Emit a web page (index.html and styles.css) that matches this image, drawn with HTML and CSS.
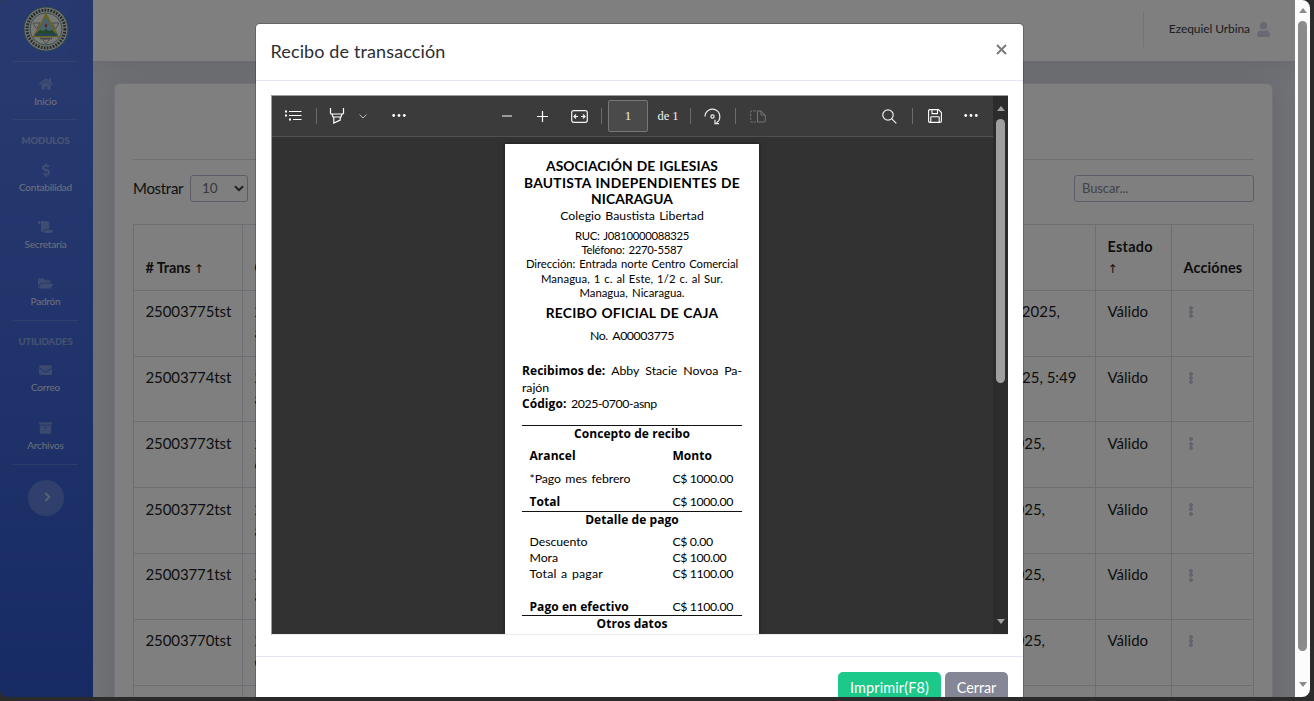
FILE: index.html
```html
<!DOCTYPE html>
<html lang="es">
<head>
<meta charset="utf-8">
<title>Recibo de transacción</title>
<link rel="stylesheet" href="styles.css">
</head>
<body>
<div class="window">
  <div class="page">
    <nav class="sidebar">
      <div class="brand">
        <svg width="46" height="46" viewBox="0 0 46 46">
          <circle cx="23" cy="23" r="22" fill="#dfe6e2" stroke="#4d8a80" stroke-width=".8"/>
          <circle cx="23" cy="23" r="18.900" fill="none" stroke="#4a504e" stroke-width="3" stroke-dasharray="1.700 1.300"/>
          <circle cx="23" cy="23" r="16" fill="#f1f4ee" stroke="#5f9d8c" stroke-width=".9"/>
          <path d="M10 17h7l-3.500 6zM29 17h7l-3.500 6zM19.500 33h7l-3.500 5.500z" fill="none" stroke="#8d9490" stroke-width=".9"/>
          <path d="M23 8.500L35 30.500H11z" fill="#8fc8dc" stroke="#d5bf38" stroke-width="1.700"/>
          <path d="M13.500 27l3.500-3 3 1 3-2 3 2 3-1 3 3 1 2.500H12.500z" fill="#4c9150"/>
          <path d="M12.500 27.500h21l1 2.300h-23z" fill="#4089bd"/>
          <path d="M23 17l1.400 2.800-1.400 2.400-1.400-2.400z" fill="#c9473c"/>
          <path d="M17 32.500h12" stroke="#777" stroke-width="1.500" stroke-dasharray="1.500 .6"/>
        </svg>
      </div>
      <hr class="divider">
      <a class="nav-item"><svg width="14" height="13" viewBox="0 0 576 512"><path d="M280 148L96 300v164a16 16 0 0 0 16 16h112a16 16 0 0 0 16-16v-96a16 16 0 0 1 16-16h64a16 16 0 0 1 16 16v96a16 16 0 0 0 16 16h112a16 16 0 0 0 16-16V300L296 148a12 12 0 0 0-16 0zM572 251l-84-69V44a12 12 0 0 0-12-12h-56a12 12 0 0 0-12 12v72l-90-74a48 48 0 0 0-61 0L4 251a12 12 0 0 0-1 17l25 31a12 12 0 0 0 17 2l235-194a12 12 0 0 1 16 0l235 194a12 12 0 0 0 17-2l25-31a12 12 0 0 0-1-17z"/></svg><span>Inicio</span></a>
      <hr class="divider">
      <div class="heading">MODULOS</div>
      <a class="nav-item"><svg width="8" height="14" viewBox="0 0 288 512"><path d="M209 233l-108-31c-12-4-21-15-21-29 0-16 13-29 30-29h66c12 0 24 4 34 11 6 4 14 4 20-2l35-34c7-7 6-18-2-24-23-18-52-29-83-30V16c0-9-7-16-16-16h-32c-9 0-16 7-16 16v48h-3C49 64-6 119 1 187c4 48 42 87 89 101l102 30c12 3 21 15 21 28 0 16-14 30-31 30h-66c-12 0-24-4-34-11-6-4-14-4-20 2l-35 34c-7 7-6 18 2 24 23 18 52 28 83 29v42c0 9 7 16 16 16h32c9 0 16-7 16-16v-42c46-1 90-28 105-72 21-61-14-132-72-149z"/></svg><span>Contabilidad</span></a>
      <a class="nav-item"><svg width="15" height="13" viewBox="0 0 640 512"><path d="M48 0C22 0 0 22 0 48v64c0 9 7 16 16 16h80V48C96 22 74 0 48 0zm208 413V352h224V96c0-53-43-96-96-96H111c11 16 17 34 17 54v362c0 38 34 69 74 63 32-5 54-34 54-66zm32-29v32c0 36-12 69-32 96h256c70 0 128-58 128-128z"/></svg><span>Secretaría</span></a>
      <a class="nav-item"><svg width="15" height="13" viewBox="0 0 576 512"><path d="M573 273l-73 124a64 64 0 0 1-55 31H46c-19 0-30-20-21-36l73-124a64 64 0 0 1 55-32h399c19 0 30 21 21 37zM152 204h328v-48c0-26-22-48-48-48H272l-64-64H48C22 44 0 66 0 92v278l70-119a96 96 0 0 1 82-47z"/></svg><span>Padrón</span></a>
      <hr class="divider">
      <div class="heading">UTILIDADES</div>
      <a class="nav-item"><svg width="13" height="13" viewBox="0 0 512 512"><path d="M502 191c4-3 10 0 10 5v204c0 26-22 48-48 48H48c-26 0-48-22-48-48V196c0-5 6-8 10-5 22 18 52 40 155 114 21 16 57 48 91 48s70-33 91-48c103-75 133-97 155-114zM256 320c23 0 57-29 74-42 133-97 144-105 175-130 5-3 7-9 7-15v-21c0-26-22-48-48-48H48C22 64 0 86 0 112v21c0 6 3 12 7 15 31 25 42 33 175 130 17 13 51 42 74 42z"/></svg><span>Correo</span></a>
      <a class="nav-item"><svg width="13" height="13" viewBox="0 0 512 512"><path fill-rule="evenodd" d="M32 448c0 18 14 32 32 32h384c18 0 32-14 32-32V160H32zm160-212c0-7 5-12 12-12h104c7 0 12 5 12 12v8c0 7-5 12-12 12H204c-7 0-12-5-12-12zM480 32H32C14 32 0 46 0 64v48c0 9 7 16 16 16h480c9 0 16-7 16-16V64c0-18-14-32-32-32z"/></svg><span>Archivos</span></a>
      <hr class="divider">
      <button class="collapse"><svg width="7" height="10" viewBox="0 0 7 10"><path d="M1.300 1l4 4-4 4" fill="none" stroke="currentColor" stroke-width="2"/></svg></button>
    </nav>
    <main class="content">
      <header class="topbar">
        <div class="user"><span>Ezequiel Urbina</span>
          <svg width="13" height="15" viewBox="0 0 448 512"><path d="M224 256a128 128 0 1 0 0-256 128 128 0 0 0 0 256zm90 32h-17a174 174 0 0 1-146 0h-17C60 288 0 348 0 422v42c0 26 22 48 48 48h352c26 0 48-22 48-48v-42c0-74-60-134-134-134z"/></svg>
        </div>
      </header>
      <section class="card">
        <hr class="rule">
        <div class="filters">
          <label>Mostrar</label>
          <div class="select">10<svg width="10" height="7" viewBox="0 0 10 7"><path d="M1 1.200l4 4 4-4" fill="none" stroke="#3e4048" stroke-width="2"/></svg></div>
          <span class="after">registros</span>
          <div class="search">Buscar...</div>
        </div>
        <div class="table">
          <div class="row head"><b># Trans <em>↑</em></b><b>Código <em>↑</em></b><b></b><b class="tall">Estado<br><em>↑</em></b><b>Acciónes</b></div>
          <div class="row"><span>25003775tst</span><span>2025-0700-<br>asnp</span><span class="date d1">27/2/2025,</span><span>Válido</span><i class="dots"></i></div>
          <div class="row"><span>25003774tst</span><span>2025-0699-<br>asnp</span><span class="date d2">26/2/2025, 5:49</span><span>Válido</span><i class="dots"></i></div>
          <div class="row"><span>25003773tst</span><span>2025-0698-<br>cmgr</span><span class="date">26/2/2025,</span><span>Válido</span><i class="dots"></i></div>
          <div class="row"><span>25003772tst</span><span>2025-0697-<br>asnp</span><span class="date">26/2/2025,</span><span>Válido</span><i class="dots"></i></div>
          <div class="row"><span>25003771tst</span><span>2025-0696-<br>asnp</span><span class="date">26/2/2025,</span><span>Válido</span><i class="dots"></i></div>
          <div class="row"><span>25003770tst</span><span>2025-0695-<br>emlr</span><span class="date">26/2/2025,</span><span>Válido</span><i class="dots"></i></div>
          <div class="row"><span></span><span></span><span></span><span></span><span></span></div>
        </div>
      </section>
    </main>
  </div>
  <div class="scrollbar"><i class="up"></i><i class="thumb"></i><i class="down"></i></div>

  <div class="backdrop">
    <div class="modal">
      <div class="modal-head"><h5>Recibo de transacción</h5><svg width="11" height="11" viewBox="0 0 11 11"><path d="M1 1l9 9M10 1l-9 9" stroke="#7b7b7b" stroke-width="2"/></svg></div>
      <div class="modal-body">
        <div class="viewer">
          <div class="doc">
            <div class="tools">
              <span class="t w44"><svg width="17" height="14" viewBox="0 0 17 14"><path d="M4 2.500h12.500M4 6.500h12.500M8 10.500h8.500" stroke="#fff"/><path d="M0 2.500h2M0 6.500h2M4 10.500h2" stroke="#fff" stroke-width="2"/></svg></span>
              <i class="sep"></i>
              <span class="t w40"><svg width="16" height="18" viewBox="0 0 16 18"><path d="M1.500 1v5q0 1 1 1h11q1 0 1-1V1M3 7l1 3h8l1-3M4.800 10v6l6.400-3v-3" fill="none" stroke="#fff" stroke-width="1.200"/></svg></span>
              <span class="t w12"><svg width="8" height="5" viewBox="0 0 8 5"><path d="M.5.5L4 4 7.500.5" fill="none" stroke="#bbb"/></svg></span>
              <span class="t w60"><svg width="14" height="4" viewBox="0 0 14 4"><g fill="#fff"><circle cx="1.700" cy="1.500" r="1.400"/><circle cx="7" cy="1.500" r="1.400"/><circle cx="12.300" cy="1.500" r="1.400"/></g></svg></span>
              <span class="t w34 mid"><svg width="10" height="2" viewBox="0 0 10 2"><path d="M0 1h10" stroke="#9b9b9b" stroke-width="2"/></svg></span>
              <span class="t w37"><svg width="11" height="11" viewBox="0 0 11 11"><path d="M0 5.500h11M5.500 0v11" stroke="#fff" stroke-width="1.200"/></svg></span>
              <span class="t w37"><svg width="17" height="13" viewBox="0 0 17 13"><rect x=".7" y=".7" width="15.600" height="11.600" rx="2" fill="none" stroke="#f2f2f2" stroke-width="1.200"/><path d="M3 6.500h4M10 6.500h4M5 4.500l-2 2 2 2M12 4.500l2 2-2 2" fill="none" stroke="#f2f2f2" stroke-width="1.200"/></svg></span>
              <i class="sep s3"></i>
              <span class="pagebox">1</span>
              <span class="t w40 of">de 1</span>
              <i class="sep s2"></i>
              <span class="t w44"><svg width="17" height="17" viewBox="0 0 17 17"><path d="M1 8.500a7.400 7.400 0 1 1 11.500 6.200M11 11.700v4h4" fill="none" stroke="#eee" stroke-width="1.200"/><circle cx="8.500" cy="8.500" r="1.600" fill="none" stroke="#eee" stroke-width="1.200"/></svg></span>
              <i class="sep"></i>
              <span class="t w44"><svg width="16" height="13" viewBox="0 0 16 13"><path d="M7.500 1v11H14q1.300 0 1.300-1V5L11 1zM11 1v4h4" fill="none" stroke="#777"/><path d="M6 .9H2Q.7.900.7 2v9q0 1.100 1.300 1.100h4" fill="none" stroke="#777" stroke-dasharray="2.500 1.200"/></svg></span>
              <span class="t w44 end"><svg width="15" height="15" viewBox="0 0 15 15"><circle cx="6" cy="6" r="5.200" fill="none" stroke="#eee" stroke-width="1.200"/><path d="M9.800 9.800l4.500 4.500" stroke="#eee" stroke-width="1.200"/></svg></span>
              <i class="sep"></i>
              <span class="t w44"><svg width="14" height="14" viewBox="0 0 14 14"><path d="M2 .6h8.500l2.900 2.900V12q0 1.400-1.400 1.400H2Q.6 13.400.6 12V2Q.6.600 2 .6zM4 .6v4h5.500v-4M2.800 13.400V8.500q0-.8.800-.8h6.800q.8 0 .8.800v4.900" fill="none" stroke="#fff" stroke-width="1.100"/></svg></span>
              <span class="t w28"><svg width="14" height="4" viewBox="0 0 14 4"><g fill="#fff"><circle cx="1.700" cy="1.500" r="1.400"/><circle cx="7" cy="1.500" r="1.400"/><circle cx="12.300" cy="1.500" r="1.400"/></g></svg></span>
            </div>
            <article class="receipt">
              <div class="org"><p>ASOCIACIÓN DE IGLESIAS</p><p class="org2">BAUTISTA INDEPENDIENTES DE</p><p class="org3">NICARAGUA</p></div>
              <p class="school">Colegio Baustista Libertad</p>
              <div class="info">
                <p class="n">RUC: J0810000088325</p><p class="n">Teléfono: 2270-5587</p>
                <p class="dir">Dirección: Entrada norte Centro Comercial</p>
                <p class="addr">Managua, 1 c. al Este, 1/2 c. al Sur.</p><p class="city">Managua, Nicaragua.</p>
              </div>
              <p class="official">RECIBO OFICIAL DE CAJA</p>
              <p class="number">No. A00003775</p>
              <div class="from">
                <p class="just"><b>Recibimos de:</b><span>Abby</span><span>Stacie</span><span>Novoa</span><span>Pa-</span></p>
                <p>rajón</p>
                <p><b>Código:</b> <span class="code">2025-0700-asnp</span></p>
              </div>
              <div class="section s-first">Concepto de recibo</div>
              <div class="lines items">
                <p><b>Arancel</b><b>Monto</b></p>
                <p><span class="concept">*Pago mes febrero</span><span class="num">C$ 1000.00</span></p>
                <p><b>Total</b><span class="num">C$ 1000.00</span></p>
              </div>
              <div class="section">Detalle de pago</div>
              <div class="lines detail">
                <p><span>Descuento</span><span class="num">C$ 0.00</span></p>
                <p><span>Mora</span><span class="num">C$ 100.00</span></p>
                <p><span class="concept tp">Total a pagar</span><span class="num">C$ 1100.00</span></p>
                <p class="cash"><b>Pago en efectivo</b><span class="num">C$ 1100.00</span></p>
              </div>
              <div class="section">Otros datos</div>
            </article>
          </div>
          <div class="doc-scroll"><i class="up"></i><i class="thumb"></i><i class="down"></i></div>
        </div>
      </div>
      <div class="modal-foot"><button class="btn green">Imprimir(F8)</button><button class="btn gray">Cerrar</button></div>
    </div>
  </div>
</div>
</body>
</html>
```
FILE: styles.css
```css
* { box-sizing: border-box; }
body { margin: 0; background: #2b2b2b; font-family: Lato, sans-serif; font-size: 15px; color: #1d1d20; overflow: hidden; }
p, h5, hr { margin: 0; }
hr { border: 0; height: 1px; }
button { border: 0; font-family: inherit; padding: 0; }

.window { position: relative; width: 1310px; height: 697px; overflow: hidden; display: flex; border-radius: 3px 8px 8px 8px; }
.page { width: 1295px; height: 697px; display: flex; overflow: hidden; }

/* sidebar */
.sidebar { width: 93px; height: 950px; flex: none; background: linear-gradient(180deg, #4e73df 10%, #224abe); text-align: center; }
.brand { height: 61px; padding-top: 6px; }
.brand svg { display: block; margin: 0 auto 0 22.500px; }
.divider { margin: 0 15px 0 13px; background: rgba(255, 255, 255, .15); }
.heading { height: 27.900px; padding: 13px 2px 0 0; font: 900 9.500px/16px Lato, sans-serif; letter-spacing: -.1px; color: rgba(255, 255, 255, .4); }
.nav-item { display: flex; flex-direction: column; align-items: center; height: 57.300px; padding: 14.500px 2px 0 0; font-size: 10px; line-height: 12px; letter-spacing: -.18px; color: rgba(255, 255, 255, .8); }
.nav-item svg { height: 14px; margin-bottom: 4px; fill: rgba(255, 255, 255, .3); }
.collapse { display: flex; align-items: center; justify-content: center; width: 36px; height: 36px; margin: 15px auto 0 28px; padding: 0 0 2px 2px; border-radius: 50%; background: rgba(255, 255, 255, .2); color: rgba(255, 255, 255, .5); }

/* page content */
.content { flex: 1; background: #e3e5ee; }
.topbar { position: relative; height: 61px; display: flex; justify-content: flex-end; padding: 12px 25px 0 0; background: #fff; box-shadow: 0 2px 28px rgba(58, 59, 69, .15); }
.user { display: flex; align-items: center; gap: 7px; height: 35px; padding-left: 25px; border-left: 1px solid #e3e6f0; font-size: 12px; line-height: 14px; letter-spacing: -.08px; color: #3a3b45; }
.user span { padding-bottom: 2px; }
.user svg { fill: #d1d3e2; }
.card { width: 1159px; height: 900px; margin: 22px 0 0 21px; padding: 76px 18px 0 18px; border: 1px solid #e3e6f0; border-radius: 6px; background: #fff; box-shadow: 0 2px 28px rgba(58, 59, 69, .15); }
.rule { height: 1px; background: #e0e0e4; margin-top: -1px; }
.filters { display: flex; align-items: center; height: 27px; margin-top: 15px; }
.filters label { width: 57px; padding-bottom: 1px; letter-spacing: -.3px; }
.select { display: flex; align-items: center; justify-content: space-between; width: 58px; height: 27px; padding: 0 3px 1px 11px; border: 1px solid #b9bbcc; border-radius: 3px; font-size: 13.500px; color: #6e707e; }
.after { margin-left: 8px; }
.search { width: 180px; height: 27px; margin-left: auto; padding-left: 7px; border: 1px solid #b9bbcc; border-radius: 3px; font-size: 13px; line-height: 25px; letter-spacing: -.1px; color: #858796; }
.table { margin-top: 22px; border-left: 1px solid #dcdeea; border-top: 1px solid #dcdeea; }
.row { display: grid; grid-template-columns: 109px 1fr 180px 76px 82px; height: 65.800px; line-height: 21px; }
.row > * { padding: 10.500px 0 0 11.500px; border-right: 1px solid #dcdeea; border-bottom: 1px solid #dcdeea; white-space: nowrap; }
.row > :first-child { letter-spacing: -.1px; }
.head > * { padding-top: 31.500px; font-size: 14.400px; }
.head em { font: 400 12px "DejaVu Sans", sans-serif; line-height: 1; }
.head .tall { padding-top: 10.500px; letter-spacing: .3px; }
.row > :last-child { letter-spacing: .15px; }
.row .date { text-align: right; padding-right: 50px; }
.row .d1 { padding-right: 35px; }
.row .d2 { padding-right: 18.500px; }
.dots { background: radial-gradient(circle at 2px 2px, #c8cad9 1.700px, transparent 2.200px) 17px 15px / 4px 4.300px no-repeat, radial-gradient(circle at 2px 2px, #c8cad9 1.700px, transparent 2.200px) 17px 19.300px / 4px 4.300px no-repeat, radial-gradient(circle at 2px 2px, #c8cad9 1.700px, transparent 2.200px) 17px 23.600px / 4px 4.300px no-repeat; }

/* scrollbars */
.scrollbar, .doc-scroll { display: flex; flex-direction: column; align-items: center; width: 15px; flex: none; }
.scrollbar { background: #fcfcfc; }
.up, .down { width: 0; border: solid transparent; border-width: 0 4.500px; }
.up { border-bottom: 5px solid #8b8b8b; margin-top: 8px; }
.down { border-top: 5px solid #8b8b8b; }
.thumb { width: 9px; height: 290px; border-radius: 5px; background: #8b8b8b; }
.scrollbar .thumb { height: 630px; margin: 8px 0 31px; }
.doc-scroll { background: #2c2c2c; }
.doc-scroll .up { border-bottom-color: #9f9f9f; margin-top: 10px; }
.doc-scroll .down { border-top-color: #9f9f9f; margin-top: 236px; }
.doc-scroll .thumb { height: 264px; margin-top: 8px; background: #9f9f9f; }

/* modal */
.backdrop { position: absolute; left: 0; top: 0; width: 1295px; height: 697px; background: rgba(0, 0, 0, .5); overflow: hidden; }
.modal { width: 769px; height: 704px; margin: 23px 0 0 255px; border: 1px solid rgba(0, 0, 0, .2); border-radius: 5px; background: #fff; background-clip: padding-box; }
.modal-head { display: flex; justify-content: space-between; height: 57px; padding: 14px 16px 0 14.500px; border-bottom: 1px solid #e3e6f0; }
.modal-head h5 { font-size: 18px; font-weight: 400; line-height: 26px; letter-spacing: .12px; color: #2c2d33; }
.modal-head svg { margin-top: 6px; }
.modal-body { height: 576px; padding: 14px 15px 0; border-bottom: 1px solid #e3e6f0; }
.viewer { display: flex; height: 540px; border: solid #9a9f9c; border-width: 1px 0 0 1px; border-bottom: 1px solid #eee; }
.doc { flex: 1; background: #323232; overflow: hidden; }
.tools { display: flex; align-items: center; height: 41px; padding-right: 8px; background: #3b3b3b; border-bottom: 1px solid #505050; }
.t { display: flex; align-items: center; justify-content: center; flex: none; }
.w12 { width: 12px; } .w28 { width: 28px; } .w34 { width: 34px; } .w37 { width: 37px; }
.w40 { width: 40px; } .w44 { width: 44px; } .w60 { width: 60px; }
.w44 svg { margin-left: -1px; }
.mid { margin-left: 61px; }
.end { margin-left: auto; }
.sep { width: 1px; height: 16px; background: #6b6b6b; flex: none; }
.s3 { margin-left: 3px; } .s2 { margin-left: 2px; }
.pagebox { width: 40px; height: 32px; margin-left: 6px; border: 1px solid #777; border-radius: 2px; background: #4a4a4a; color: #eee; text-align: center; font: 13px/30px "Liberation Serif", serif; }
.of { color: #f2f2f2; font: 12.500px "Liberation Serif", serif; }

/* receipt */
.receipt { width: 254px; height: 600px; margin: 7px auto 0 233px; padding: 14px 17px 0; background: #fff; color: #000; font-size: 12.300px; line-height: 16px; letter-spacing: -.05px; box-shadow: 0 0 4px rgba(0, 0, 0, .5); white-space: nowrap; }
.receipt b, .section { font: 700 12px/inherit "Open Sans", sans-serif; font-family: "Open Sans", sans-serif; font-size: 12px; font-weight: 700; letter-spacing: .06px; }
.org, .school, .info, .official, .number, .section { text-align: center; }
.org, .official { font-size: 13.800px; font-weight: 700; letter-spacing: .08px; word-spacing: .6px; }
.org { display: flex; flex-direction: column; align-items: center; line-height: 16.500px; }
.org2 { letter-spacing: .3px; }
.school { letter-spacing: 0; word-spacing: 1.200px; }
.info { margin-top: 5.500px; font-size: 11.300px; line-height: 14.200px; }
.n { letter-spacing: -.3px; word-spacing: 1.500px; }
.dir { letter-spacing: -.05px; word-spacing: 1.100px; }
.addr { letter-spacing: .1px; word-spacing: .9px; }
.city { letter-spacing: 0; word-spacing: 1.500px; }
.official { margin-top: 5px; letter-spacing: .26px; }
.number { margin-top: 6.800px; letter-spacing: -.4px; word-spacing: 2px; }
.from { margin-top: 19.200px; line-height: 16.500px; }
.just { display: flex; justify-content: space-between; }
.code { letter-spacing: -.4px; margin-left: 1.500px; }
.section { border-top: 1.500px solid #111; height: 17px; line-height: 15px; }
.s-first { margin-top: 12px; }
.lines p { display: grid; grid-template-columns: 143px 1fr; padding-left: 7.500px; }
.items { padding-top: 2.500px; height: 69px; line-height: 23px; }
.detail { padding-top: 6.500px; height: 87px; }
.cash { margin-top: 17px; }
.num { letter-spacing: -.38px; }
.concept { letter-spacing: -.05px; word-spacing: 1.200px; }
.tp { letter-spacing: .2px; }

.modal-foot { display: flex; justify-content: flex-end; gap: 4px; padding: 15px 15px 0; }
.btn { width: 63px; height: 35px; border-radius: 5px; font-size: 14.400px; line-height: 17px; padding-bottom: 4px; letter-spacing: -.05px; color: #fff; }
.green { width: 103px; background: #1cc88a; letter-spacing: .15px; }
.gray { background: #858796; }
```
